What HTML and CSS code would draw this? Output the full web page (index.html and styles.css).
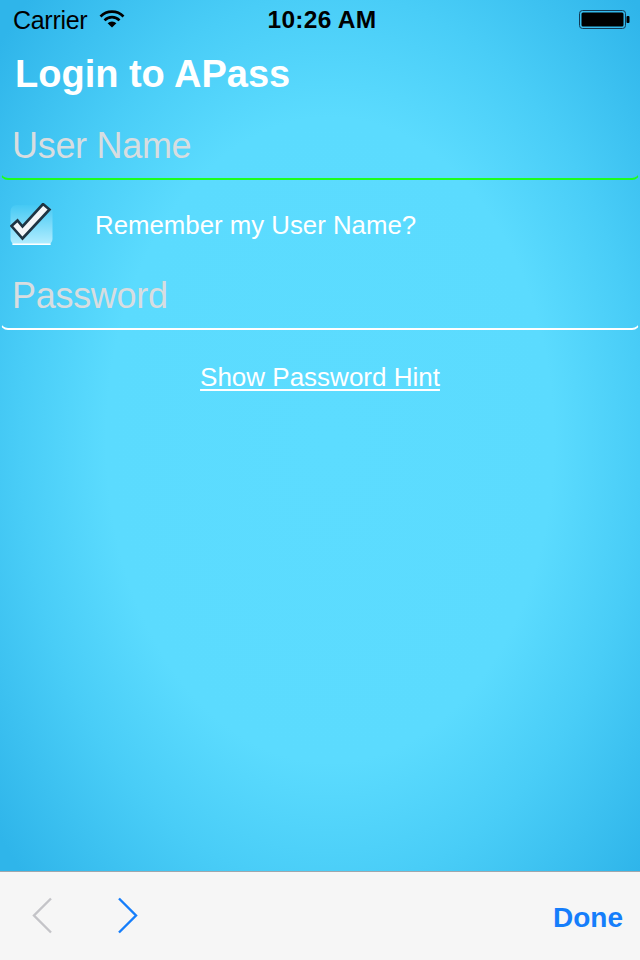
FILE: index.html
```html
<!DOCTYPE html>
<html>
<head>
<meta charset="utf-8">
<link rel="stylesheet" href="styles.css">
</head>
<body>
<div class="screen">
  <div class="statusbar">
    <div class="sb-left">
      <span class="carrier">Carrier</span>
      <svg class="wifi" width="26" height="18" viewBox="0 0 26 18">
        <path d="M1.5 6.5 A16 16 0 0 1 24.5 6.5" fill="none" stroke="#000" stroke-width="2.6"/>
        <path d="M5.5 10.3 A10.5 10.5 0 0 1 20.5 10.3" fill="none" stroke="#000" stroke-width="2.6"/>
        <path d="M13 17.5 L8.6 13.3 A6.3 6.3 0 0 1 17.4 13.3 Z" fill="#000"/>
      </svg>
    </div>
    <div class="sb-time">10:26 AM</div>
    <div class="sb-right">
      <svg class="battery" width="52" height="20" viewBox="0 0 52 20">
        <rect x="0.5" y="0.5" width="46" height="18" rx="3" fill="none" stroke="#123a55" stroke-width="1"/>
        <rect x="2.5" y="2.5" width="42" height="14" rx="1.5" fill="#000"/>
        <rect x="47.5" y="6" width="3" height="7" rx="1" fill="#000"/>
      </svg>
    </div>
  </div>

  <h1 class="title">Login to APass</h1>

  <div class="field field-user">
    <span class="placeholder">User Name</span>
  </div>

  <div class="remember">
    <svg class="check" width="46" height="44" viewBox="0 0 46 44">
      <defs>
        <linearGradient id="cbg" x1="0" y1="0" x2="0" y2="1">
          <stop offset="0" stop-color="#45c9f4"/>
          <stop offset="1" stop-color="#b4eeff"/>
        </linearGradient>
      </defs>
      <rect x="0.5" y="2" width="42" height="40" rx="6" fill="url(#cbg)"/>
      <path d="M3 41.2 H40" stroke="#ffffff" stroke-width="1.6" stroke-linecap="round"/>
      <polygon points="1.5,23 7.5,17.5 12.5,23.5 33,1 39.5,6.5 12.5,35.5" fill="#f3f6f8" stroke="#1e3442" stroke-width="2.6" stroke-linejoin="miter"/>
    </svg>
    <span class="remember-label">Remember my User Name?</span>
  </div>

  <div class="field field-pass">
    <span class="placeholder">Password</span>
  </div>

  <div class="hint-row">
    <span class="hint">Show Password Hint</span>
  </div>

  <div class="spacer"></div>

  <div class="toolbar">
    <div class="nav">
      <svg class="chev" width="22" height="38" viewBox="0 0 22 38">
        <polyline points="20,1.5 3,18.5 20,35.5" fill="none" stroke="#c4c4c8" stroke-width="2.4"/>
      </svg>
      <svg class="chev" width="22" height="38" viewBox="0 0 22 38">
        <polyline points="2,1.5 19,18.5 2,35.5" fill="none" stroke="#157efb" stroke-width="2.4"/>
      </svg>
    </div>
    <span class="done">Done</span>
  </div>
</div>
</body>
</html>
```

FILE: styles.css
```css
* { box-sizing: border-box; }
html, body { margin: 0; padding: 0; }
body {
  width: 640px;
  height: 960px;
  font-family: "Liberation Sans", Arial, sans-serif;
  overflow: hidden;
}
.screen {
  width: 640px;
  height: 960px;
  display: flex;
  flex-direction: column;
  background:
    radial-gradient(ellipse 430px 620px at 330px 440px, #5cdcff 0%, #5bdbfe 52%, #49cdf7 72%, #2fb5ea 100%);
  background-color: #30b5ea;
}
.statusbar {
  height: 40px;
  display: flex;
  align-items: center;
  justify-content: space-between;
  padding: 0 9px 0 13px;
  color: #000;
  font-size: 25px;
}
.sb-left { display: flex; align-items: center; gap: 12px; width: 200px; }
.carrier { letter-spacing: -0.3px; }
.wifi { margin-top: -2px; }
.sb-time { font-weight: bold; font-size: 24.5px; letter-spacing: 0.3px; }
.sb-right { width: 200px; display: flex; justify-content: flex-end; }
.title {
  margin: 0;
  height: 66px;
  padding: 11px 0 0 15px;
  font-size: 38px;
  font-weight: bold;
  color: #fff;
  line-height: 46px;
}
.field {
  height: 74px;
  display: flex;
  align-items: center;
  padding: 0 11px;
  border-bottom: 2px solid #fff;
  border-left: 1px solid transparent;
  border-right: 1px solid transparent;
  border-radius: 0 0 8px 8px;
}
.field-user {
  border-bottom-color: #1cff1c;
  padding-top: 8px;
}
.field-pass {
  height: 70px;
  padding-top: 4px;
  border-bottom-color: #ffffff;
}
.placeholder {
  font-size: 36px;
  color: #d8dde0;
  letter-spacing: -0.3px;
}
.remember {
  height: 80px;
  display: flex;
  align-items: center;
  padding: 10px 0 0 10px;
}
.check { display: block; }
.remember-label {
  margin-left: 39px;
  font-size: 25.8px;
  color: #fff;
  letter-spacing: 0;
}
.hint-row {
  height: 96px;
  display: flex;
  justify-content: center;
  align-items: center;
  padding-bottom: 2px;
}
.hint {
  color: #fff;
  font-size: 26px;
  text-decoration: underline;
  text-underline-offset: 3px;
  text-decoration-thickness: 2px;
}
.spacer { flex: 1; }
.toolbar {
  height: 89px;
  border-top: 1px solid #9fa7ad;
  background: #f6f6f6;
  display: flex;
  align-items: center;
  justify-content: space-between;
  padding: 0 17px 0 31px;
}
.nav { display: flex; align-items: center; gap: 64px; margin-top: 0; }
.chev { display: block; }
.done {
  color: #157efb;
  font-size: 28px;
  font-weight: bold;
  margin-top: 4px;
}
```
